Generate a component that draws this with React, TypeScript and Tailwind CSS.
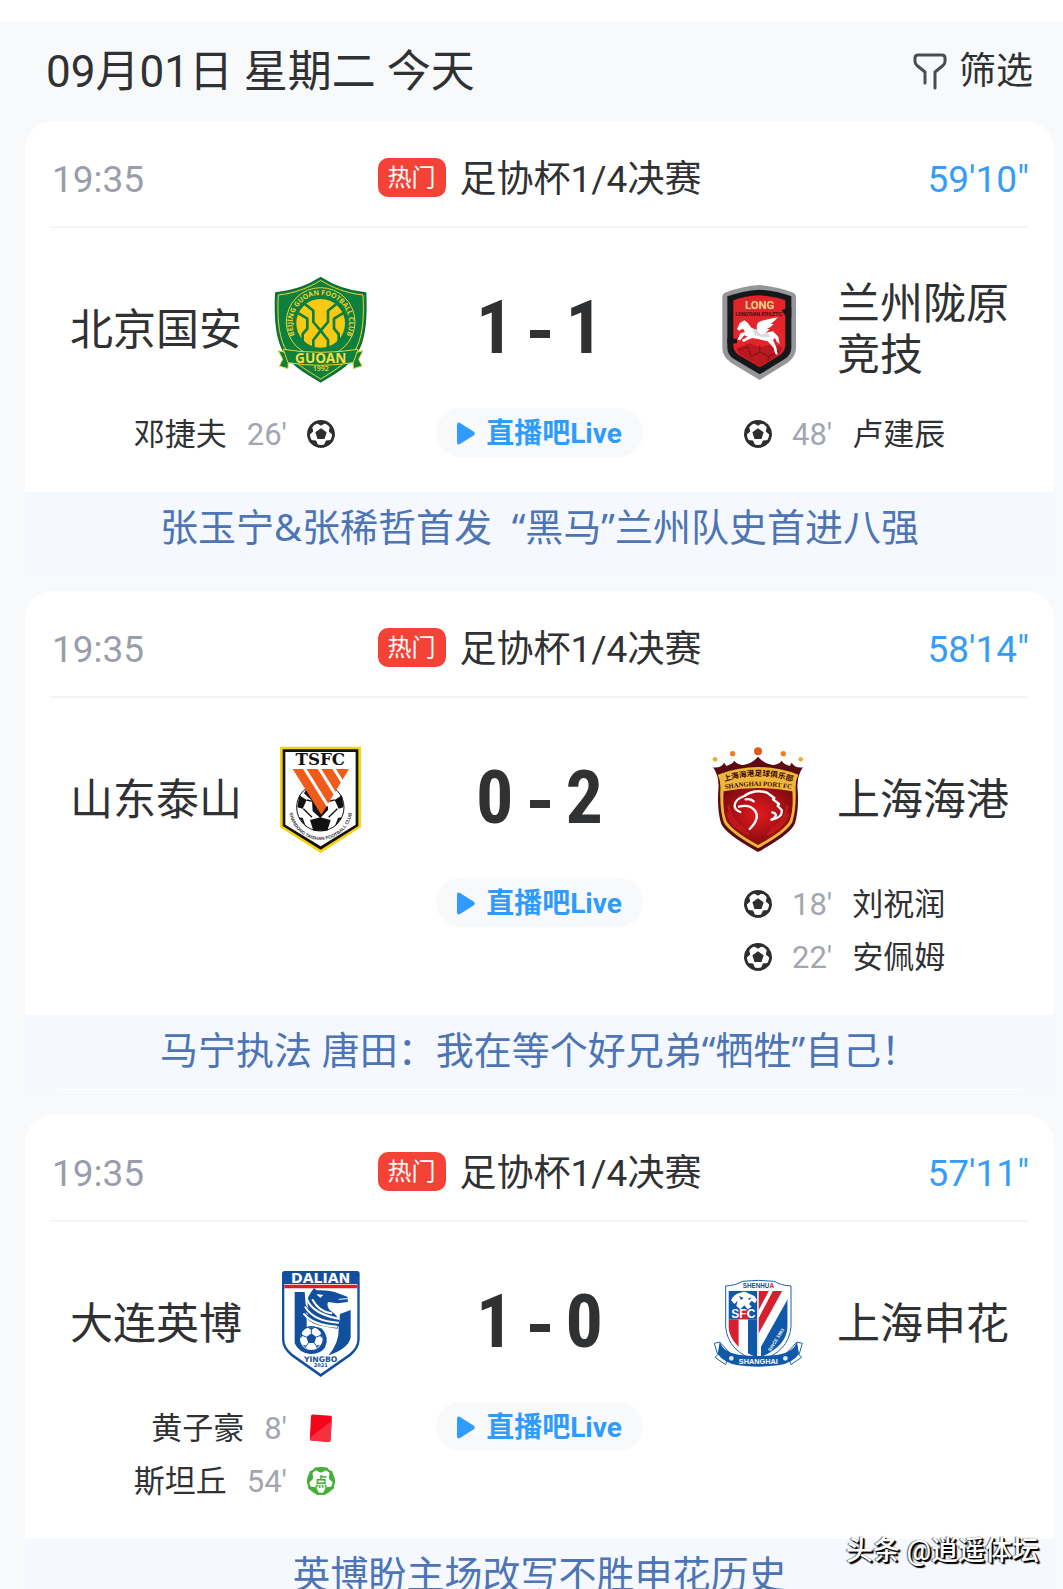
import React from "react";

type EventKind = "goal" | "penalty" | "red";

type MatchEvent = {
  player: string;
  minute: string;
  kind: EventKind;
};

type Team = {
  name: string;
  logo: React.ReactNode;
  events: MatchEvent[];
};

type Match = {
  id: string;
  kickoff: string;
  league: string;
  clock: string;
  score: [number, number];
  home: Team;
  away: Team;
  headline: string;
  underline?: boolean;
};

const FilterIcon = () => (
  <svg viewBox="0 0 36 38" className="h-[38px] w-9" fill="none" stroke="#4a4c50" strokeWidth="3" strokeLinejoin="round" strokeLinecap="round">
    <path d="M13 31V20L5 13.500Q3 12 3 9.500V6Q3 3 6 3H30Q33 3 33 6V9.500Q33 12 31 13.500L23 20V36" />
  </svg>
);

const PATCH_ANGLES = [0, 72, 144, 216, 288];

const GoalIcon = () => (
  <svg viewBox="0 0 28 28" className="size-7 shrink-0" role="img" aria-label="进球">
    <circle cx="14" cy="14" r="12.500" fill="#fff" stroke="#2d2e30" strokeWidth="2.800" />
    <path d="M14 8.200L19.600 12.300L17.500 18.900H10.500L8.400 12.300Z" fill="#2d2e30" />
    {PATCH_ANGLES.map((angle) => (
      <path key={angle} d="M8.300 1.800L14 5.200L19.700 1.800Z" fill="#2d2e30" stroke="#2d2e30" strokeLinejoin="round" transform={`rotate(${angle} 14 14)`} />
    ))}
  </svg>
);

const PenaltyIcon = () => (
  <svg viewBox="0 0 28 28" className="size-7 shrink-0" role="img" aria-label="点球">
    <circle cx="14" cy="14" r="12.800" fill="#fff" stroke="#45b035" strokeWidth="2.200" />
    {PATCH_ANGLES.map((angle) => (
      <path key={angle} d="M8 1.500L14 5L20 1.500Z" fill="#45b035" stroke="#45b035" strokeWidth="2" strokeLinejoin="round" transform={`rotate(${angle} 14 14)`} />
    ))}
    <circle cx="14" cy="14" r="8.400" fill="#fff" />
    <text x="14" y="19" textAnchor="middle" fontSize="13" fontWeight="700" fill="#45b035">
      点
    </text>
  </svg>
);

const RedCardIcon = () => (
  <svg viewBox="0 0 28 28" className="size-7 shrink-0" role="img" aria-label="红牌">
    <path d="M5.500 0.500L23.500 1.800Q25 2 24.900 3.500L23.500 26.500Q23.300 28 21.800 27.900L4.200 26.400Q2.700 26.200 2.800 24.700L4 2Q4.200 0.400 5.500 0.500Z" fill="#f5051c" />
    <path d="M24.700 7L3 23.500V24.700Q2.700 26.200 4.200 26.400L21.800 27.900Q23.300 28 23.500 26.500Z" fill="#f5303f" />
  </svg>
);

const GuoanLogo = () => (
  <svg viewBox="21 45 318 318" className="size-[106px] shrink-0 overflow-visible" role="img" aria-label="北京国安队徽">
    <path d="M182 53C150 74 102 94 47 99C44 165 46 222 66 264C90 316 140 340 182 366C224 340 274 316 298 264C318 222 320 165 317 99C262 94 214 74 182 53Z" fill="#0d7f3f" stroke="#0a6b36" strokeWidth="4" />
    <path d="M182 61C150 82 104 100 55 105C52 165 54 218 73 260C96 308 140 330 182 357C224 330 268 308 291 260C310 218 312 165 309 105C260 100 214 82 182 61Z" fill="none" stroke="#f2d22e" strokeWidth="3" />
    <circle cx="182" cy="186" r="103" fill="#0d7f3f" stroke="#f2d22e" strokeWidth="3" />
    <circle cx="182" cy="190" r="73" fill="#f8ca15" />
    <g fill="none" stroke="#0d7f3f" strokeWidth="8" strokeLinejoin="round">
      <path d="M130 128L160 152V186L182 212L204 186V152L234 128" />
      <path d="M160 272V240L182 212L204 240V272" />
      <path d="M112 158L142 176V206L128 222V254" />
      <path d="M252 158L222 176V206L236 222V254" />
    </g>
    <path id="guoan-arc" d="M106 228A85 85 0 1 1 258 228" fill="none" />
    <text fontFamily="Noto Sans" fontSize="21" fontWeight="700" fill="#f2d22e">
      <textPath href="#guoan-arc" startOffset="50%" textAnchor="middle">
        BEIJING GUOAN FOOTBALL CLUB
      </textPath>
    </text>
    <path d="M55 272L86 280L84 326L58 318L68 298ZM309 272L278 280L280 326L306 318L296 298Z" fill="#0d7f3f" stroke="#f2d22e" strokeWidth="3" />
    <path d="M70 268Q182 286 294 268L280 308Q182 324 84 308Z" fill="#0d7f3f" stroke="#f2d22e" strokeWidth="3" />
    <text x="182" y="308" textAnchor="middle" fontFamily="Noto Sans" fontSize="41" fontWeight="700" fill="#f8dd3a">
      GUOAN
    </text>
    <text x="182" y="334" textAnchor="middle" fontFamily="Noto Sans" fontSize="21" fontWeight="600" fill="#f2d22e">
      1992
    </text>
  </svg>
);

const LongyuanLogo = () => (
  <svg viewBox="21 45 318 318" className="size-[106px] shrink-0 overflow-visible" role="img" aria-label="兰州陇原竞技队徽">
    <path d="M182 75Q235 80 283 98Q291 101 291 110V265Q291 290 266 308L182 360L96 308Q70 290 70 265V110Q70 101 78 98Q130 78 182 75Z" fill="#949698" />
    <path d="M182 89Q232 93 277 109V263Q277 284 257 297L182 343L105 297Q85 284 85 263V109Q130 92 182 89Z" fill="#15171a" />
    <path d="M182 106Q224 108 259 121V258Q257 274 244 284L182 322L118 284Q104 274 103 258V121Q140 108 182 106Z" fill="#e3242b" />
    <path d="M112 266L150 250L182 262L216 252L252 262L240 284L182 320L120 282Z" fill="#b9191f" />
    <path d="M118 270L146 262L156 290M156 290L182 276L210 290L206 305M210 290L240 272M182 276V256" fill="none" stroke="#8e1318" strokeWidth="4" />
    <path d="M248 150L277 142V172H262Z" fill="#15171a" />
    <path d="M85 236H114V250H85Z" fill="#15171a" />
    <text x="182" y="147" textAnchor="middle" fontFamily="Roboto" fontSize="34" fontWeight="700" fill="#f3d488">
      LONG
    </text>
    <text x="180" y="167" textAnchor="middle" fontFamily="Roboto" fontSize="14" fontWeight="700" fill="#3b1113">
      LONGYUAN ATHLETIC
    </text>
    <path d="M114 207L122 190L136 181L146 188L158 204L174 210Q170 190 184 184Q204 178 236 172Q226 186 215 191L224 192Q214 204 204 206L212 208Q205 216 198 218L222 214L238 230L242 252L234 246L228 234L222 240L232 262L236 286L228 280L224 264L206 244L180 238L160 234L150 238L134 246L128 240L146 230L136 226L124 240L116 240L124 220L138 216L132 206L120 212Z" fill="#fff" />
    <path d="M158 204L174 210L186 224L206 218L214 230L192 232L168 226Z" fill="#d9dadd" />
  </svg>
);

const TaishanLogo = () => (
  <svg viewBox="21 45 318 318" className="size-[106px] shrink-0 overflow-visible" role="img" aria-label="山东泰山队徽">
    <path d="M60 50H303V292L182 369L60 292Z" fill="#f6d211" />
    <path d="M68 58H295V288L182 359L68 288Z" fill="#111" />
    <path d="M76 66H287V284L182 349L76 284Z" fill="#fff" />
    <text x="181" y="105" textAnchor="middle" fontFamily="DejaVu Serif" fontSize="50" fontWeight="700" fill="#111">
      TSFC
    </text>
    <circle cx="181" cy="232" r="71" fill="#fff" stroke="#111" strokeWidth="3" />
    <path d="M143 170L181 160L222 168L226 186L204 208L204 240L181 264L158 244L156 212L132 190Z" fill="#111" />
    <path d="M118 196L140 210L128 236L112 232ZM246 196L224 210L236 236L250 232ZM150 270L181 262L212 270L202 302H160ZM116 262L128 264L138 290ZM246 262L234 264L224 290Z" fill="#111" />
    <path d="M130 236L156 262M232 236L206 262M140 210L158 214M224 210L204 214" stroke="#111" strokeWidth="4" />
    <path d="M98 117H267L184 254Z" fill="#f05a1a" />
    <path d="M132 113L204 228M176 113L226 193M220 113L248 158" stroke="#fff" strokeWidth="9" />
    <path id="taishan-arc" d="M88 236A94 94 0 0 0 276 236" fill="none" />
    <text fontFamily="Liberation Sans" fontSize="14" fontWeight="700" fill="#333">
      <textPath href="#taishan-arc" startOffset="50%" textAnchor="middle">
        SHANDONG TAISHAN FOOTBALL CLUB
      </textPath>
    </text>
  </svg>
);

const PortLogo = () => (
  <svg viewBox="21 45 318 318" className="size-[106px] shrink-0 overflow-visible" role="img" aria-label="上海海港队徽">
    <defs>
      <radialGradient id="port-red" cx="0.500" cy="0.450" r="0.600">
        <stop offset="0" stopColor="#e51a1e" />
        <stop offset="1" stopColor="#7c0a10" />
      </radialGradient>
    </defs>
    <circle cx="177" cy="64" r="12" fill="#e35a1c" />
    <circle cx="101" cy="71" r="8" fill="#ea8224" />
    <circle cx="253" cy="71" r="8" fill="#ea8224" />
    <circle cx="48" cy="88" r="7" fill="#efae2b" />
    <circle cx="305" cy="88" r="7" fill="#efae2b" />
    <path d="M42 112Q64 116 76 98L82 108Q100 104 106 92Q118 108 136 104Q160 100 177 80Q194 100 218 104Q236 108 248 92Q254 104 272 108L278 98Q290 116 312 112Q292 140 296 180Q300 240 288 280Q276 312 177 366Q78 312 66 280Q54 240 58 180Q62 140 42 112Z" fill="#5a0a10" />
    <path d="M56 134Q178 88 298 134Q288 154 290 180Q292 240 280 276Q266 306 177 355Q88 306 74 276Q62 240 64 180Q66 154 56 134Z" fill="#efb739" />
    <path d="M74 184Q177 164 280 184Q284 240 272 272Q258 300 177 345Q96 300 82 272Q70 240 74 184Z" fill="url(#port-red)" />
    <path d="M88 226Q96 276 140 300M86 250Q102 296 150 312M266 226Q258 276 214 300M268 250Q252 296 204 312" fill="none" stroke="#c41a1c" strokeWidth="6" />
    <path id="port-arc-cn" d="M62 160Q177 116 294 160" fill="none" />
    <path id="port-arc-en" d="M66 180Q177 156 290 180" fill="none" />
    <text fontFamily="Noto Sans CJK SC" fontSize="23" fontWeight="700" fill="#3d0a0c">
      <textPath href="#port-arc-cn" startOffset="50%" textAnchor="middle">
        上海海港足球俱乐部
      </textPath>
    </text>
    <text fontFamily="Liberation Serif" fontSize="20" fontWeight="700" fill="#3d0a0c">
      <textPath href="#port-arc-en" startOffset="50%" textAnchor="middle">
        SHANGHAI PORT FC
      </textPath>
    </text>
    <g fill="none" stroke="#fff" strokeWidth="7" strokeLinecap="round" strokeLinejoin="round">
      <path d="M124 246Q106 240 107 226Q108 208 136 198Q166 176 204 188L226 204L222 208L240 222L236 228L248 240Q252 262 218 269" />
      <path d="M218 269Q236 258 228 250L220 247" />
      <path d="M120 230Q152 222 168 242Q184 266 152 297" />
      <path d="M140 208Q156 206 164 214" />
    </g>
  </svg>
);

const DalianLogo = () => (
  <svg viewBox="21 57 318 318" className="size-[106px] shrink-0 overflow-visible" role="img" aria-label="大连英博队徽">
    <path d="M74 63H291Q299 63 299 71V268Q299 296 272 318L182 381L93 318Q66 296 66 268V71Q66 63 74 63Z" fill="#12509d" />
    <path d="M73 102H292V268Q292 292 268 311L182 371L97 311Q73 292 73 268Z" fill="#fff" />
    <path d="M73 104H292V115H73Z" fill="#e4192d" />
    <text x="182" y="99" textAnchor="middle" fontFamily="DejaVu Sans" fontSize="42" fontWeight="700" fill="#fff">
      DALIAN
    </text>
    <path d="M104 126H134L140 200V236Q168 226 186 236Q210 262 194 294Q180 312 150 312Q116 308 104 280Z" fill="#12509d" />
    <path d="M152 128L162 114L170 121Q200 119 224 126L262 140L264 156L232 160L204 156Q198 170 212 182Q238 200 240 222L232 236Q200 232 176 226Q144 218 128 186L146 196Q128 174 128 152L146 176Q136 150 152 128Z" fill="#12509d" />
    <path d="M240 192L272 180V262Q266 296 206 316Q238 276 236 236Z" fill="#12509d" />
    <path d="M172 134L188 136L180 142ZM236 148L262 146" fill="#fff" stroke="#fff" strokeWidth="3" />
    <g fill="none" stroke="#fff" strokeWidth="6" strokeLinecap="round">
      <path d="M142 150Q160 192 236 206" />
      <path d="M136 172Q162 214 234 218" />
      <path d="M132 192Q160 226 230 230" />
      <path d="M158 150Q176 184 214 190" />
    </g>
    <circle cx="154" cy="266" r="36" fill="#fff" stroke="#12509d" strokeWidth="4" />
    <path d="M154 250L169 261L163 279H145L139 261Z" fill="#12509d" />
    <path d="M154 250V238M169 261L182 256M163 279L172 292M145 279L136 292M139 261L126 256" stroke="#12509d" strokeWidth="3" />
    <path d="M142 232H166L154 240ZM184 246L189 266L180 258ZM124 246L119 266L128 258ZM168 296L180 284L172 286ZM140 296L128 284L136 286Z" fill="#12509d" />
    <text x="182" y="335" textAnchor="middle" fontFamily="DejaVu Sans" fontSize="23" fontWeight="700" fill="#12509d">
      YINGBO
    </text>
    <text x="182" y="351" textAnchor="middle" fontFamily="DejaVu Sans" fontSize="15" fontWeight="700" fill="#12509d">
      2021
    </text>
  </svg>
);

const ShenhuaLogo = () => (
  <svg viewBox="21 57 318 318" className="size-[106px] shrink-0 overflow-visible" role="img" aria-label="上海申花队徽">
    <defs>
      <clipPath id="shenhua-shield">
        <path d="M88 122H266V230Q262 292 178 324Q94 292 88 230Z" />
      </clipPath>
    </defs>
    <path d="M80 108Q112 106 130 94Q178 88 226 94Q244 106 276 108V230Q270 306 178 334Q86 306 80 230Z" fill="#fff" stroke="#1b62a8" strokeWidth="3" />
    <g clipPath="url(#shenhua-shield)">
      <path d="M88 122H266V330H88Z" fill="#fff" />
      <path d="M88 122H174V208H88Z" fill="#1059a8" />
      <path d="M88 208H119V330H88ZM178 122H210L178 182ZM178 206L222 122H250L178 252Z" fill="#d7202f" />
      <path d="M147 208H174V330H147Z" fill="#1059a8" />
      <path d="M268 144V330H186V290Z" fill="#1059a8" />
      <path d="M174 122H179V330H174Z" fill="#dfe4ea" />
      <path d="M119 180H147V208H119Z" fill="#d7202f" />
    </g>
    <path d="M96 150Q104 132 124 128Q138 122 148 130L166 138L174 150L168 160L158 152L150 162L158 170L146 178L136 166L124 178L112 168L116 152L106 162Z" fill="#fff" />
    <path d="M120 138L134 144L126 150ZM146 146L158 142L152 150Z" fill="#1059a8" />
    <text x="133" y="205" textAnchor="middle" fontFamily="Liberation Sans" fontSize="36" fontWeight="700" fill="#fff">
      SFC
    </text>
    <text x="178" y="114" textAnchor="middle" fontFamily="Liberation Sans" fontSize="19" fontWeight="700" fill="#1b4f94">
      SHENHU<tspan fill="#d7202f">A</tspan>
    </text>
    <text x="232" y="274" textAnchor="middle" fontFamily="Liberation Sans" fontSize="14" fontWeight="700" fill="#fff" transform="rotate(-58 232 270)">
      SINCE 1993
    </text>
    <path d="M62 276L46 280L56 314L48 322L80 344L92 308ZM294 276L310 280L300 314L308 322L276 344L264 308Z" fill="#fff" stroke="#1b62a8" strokeWidth="3" />
    <path d="M62 276Q74 308 118 314Q178 322 238 314Q282 308 294 276L300 312Q280 340 238 346Q178 354 118 346Q76 340 56 312Z" fill="#1059a8" />
    <circle cx="97" cy="325" r="7" fill="#dfe9f4" />
    <circle cx="259" cy="325" r="7" fill="#dfe9f4" />
    <text x="178" y="341" textAnchor="middle" fontFamily="Liberation Sans" fontSize="22" fontWeight="700" fill="#fff">
      SHANGHAI
    </text>
  </svg>
);

const matches: Match[] = [
  {
    id: "guoan-longyuan",
    kickoff: "19:35",
    league: "足协杯1/4决赛",
    clock: "59'10\"",
    score: [1, 1],
    home: {
      name: "北京国安",
      logo: <GuoanLogo />,
      events: [{ player: "邓捷夫", minute: "26'", kind: "goal" }],
    },
    away: {
      name: "兰州陇原竞技",
      logo: <LongyuanLogo />,
      events: [{ player: "卢建辰", minute: "48'", kind: "goal" }],
    },
    headline: "张玉宁&张稀哲首发  “黑马”兰州队史首进八强",
  },
  {
    id: "taishan-port",
    kickoff: "19:35",
    league: "足协杯1/4决赛",
    clock: "58'14\"",
    score: [0, 2],
    home: { name: "山东泰山", logo: <TaishanLogo />, events: [] },
    away: {
      name: "上海海港",
      logo: <PortLogo />,
      events: [
        { player: "刘祝润", minute: "18'", kind: "goal" },
        { player: "安佩姆", minute: "22'", kind: "goal" },
      ],
    },
    headline: "马宁执法 唐田：我在等个好兄弟“牺牲”自己！",
    underline: true,
  },
  {
    id: "yingbo-shenhua",
    kickoff: "19:35",
    league: "足协杯1/4决赛",
    clock: "57'11\"",
    score: [1, 0],
    home: {
      name: "大连英博",
      logo: <DalianLogo />,
      events: [
        { player: "黄子豪", minute: "8'", kind: "red" },
        { player: "斯坦丘", minute: "54'", kind: "penalty" },
      ],
    },
    away: { name: "上海申花", logo: <ShenhuaLogo />, events: [] },
    headline: "英博盼主场改写不胜申花历史",
  },
];

const EventIcon = ({ kind }: { kind: EventKind }) => {
  if (kind === "red") return <RedCardIcon />;
  if (kind === "penalty") return <PenaltyIcon />;
  return <GoalIcon />;
};

const EventList = ({ events, side }: { events: MatchEvent[]; side: "home" | "away" }) => (
  <ul className={side === "home" ? "pr-[38px]" : "pl-[38px]"}>
    {events.map((event) => (
      <li
        key={event.player}
        className={`flex h-[53px] items-center justify-end gap-5 pb-px text-[31px] leading-none ${side === "home" ? "" : "flex-row-reverse"}`}
      >
        <span>{event.player}</span>
        <span className="text-[#a3a6b0]">{event.minute}</span>
        <EventIcon kind={event.kind} />
      </li>
    ))}
  </ul>
);

const MatchCard = ({ match }: { match: Match }) => (
  <article>
    <div className="rounded-t-[28px] bg-white pb-[31px]">
      {/* Kickoff, competition and match clock */}
      <header className="mx-[25px] grid h-[107px] grid-cols-[1fr_auto_1fr] items-center border-b-2 border-[#f5f6f8] pt-2 text-[37px] leading-none">
        <time className="pt-1 pl-0.5 text-[#9a9dab]">{match.kickoff}</time>
        <div className="flex items-center gap-[14px]">
          <span className="flex h-[39px] w-[68px] items-center justify-center rounded-[10px] bg-[#f44336] pt-px text-2xl leading-none text-white">热门</span>
          <h2 className="pt-1">{match.league}</h2>
        </div>
        <span className="pt-1 text-right text-[#359df8]">{match.clock}</span>
      </header>

      {/* Teams and score */}
      <div className="grid grid-cols-[1fr_333px_1fr] items-center pt-[47px]">
        <div className="flex items-center justify-end gap-[25px]">
          <span className="pt-1 text-[43px] leading-[51px]">{match.home.name}</span>
          {match.home.logo}
        </div>
        <div className="flex items-center justify-center gap-4 font-['Roboto_Condensed','Roboto',sans-serif] text-[74px] leading-none font-bold">
          <span>{match.score[0]}</span>
          <span className="mt-3 h-2 w-5 bg-[#333]" aria-hidden="true" />
          <span>{match.score[1]}</span>
        </div>
        <div className="flex items-center gap-[25px]">
          {match.away.logo}
          <span className="w-[176px] pt-1 text-[43px] leading-[51px]">{match.away.name}</span>
        </div>
      </div>

      {/* Goals, cards and the live link */}
      <div className="mt-[27px] grid grid-cols-[1fr_333px_1fr] items-start">
        <EventList events={match.home.events} side="home" />
        <div className="flex h-[53px] items-start justify-center">
          <button type="button" className="flex h-[49px] w-[207px] items-center justify-center gap-[11px] rounded-full bg-[#f7f9fb] pt-0.5 text-[28px] leading-none font-bold text-[#2f9bff]">
            <svg viewBox="0 0 18 23" className="h-[23px] w-[18px]" fill="currentColor" aria-hidden="true">
              <path d="M0 3Q0 -0.500 3 1L16.500 9.500Q19 11.500 16.500 13.500L3 22Q0 23.500 0 20Z" />
            </svg>
            直播吧Live
          </button>
        </div>
        <EventList events={match.away.events} side="away" />
      </div>
    </div>

    <div className="bg-linear-to-b from-[#f5f9ff] from-60% to-[#f7f9fb] to-85% pb-[25px]">
      <p className="h-[74px] text-center font-['Noto_Sans','Noto_Sans_CJK_SC',sans-serif] text-[38px] leading-[68px] whitespace-pre text-[#4d74b5]">
        {match.headline}
      </p>
      {match.underline && <div className="mx-8 h-px bg-white" />}
    </div>
  </article>
);

export default function App() {
  return (
    <div className="relative h-screen overflow-hidden border-t-[21px] border-white bg-[#f7f9fb] font-['Roboto','Noto_Sans_CJK_SC',sans-serif] text-[#303133]">
      <div className="flex h-[100px] items-center justify-between pr-[30px] pl-[46px] leading-none">
        <h1 className="pt-0.5 text-[44px]">09月01日 星期二 今天</h1>
        <button type="button" className="flex items-center gap-[11px] text-[37px]">
          <FilterIcon />
          筛选
        </button>
      </div>

      <main className="mr-[9px] ml-[25px]">
        {matches.map((match) => (
          <MatchCard key={match.id} match={match} />
        ))}
      </main>

      <div className="absolute right-6 bottom-5 text-[27px] leading-9 font-medium text-white [text-shadow:1px_1px_1px_#000,2px_2px_1px_#000,-1px_0_1px_#555]">
        头条 @逍遥体坛
      </div>
    </div>
  );
}
